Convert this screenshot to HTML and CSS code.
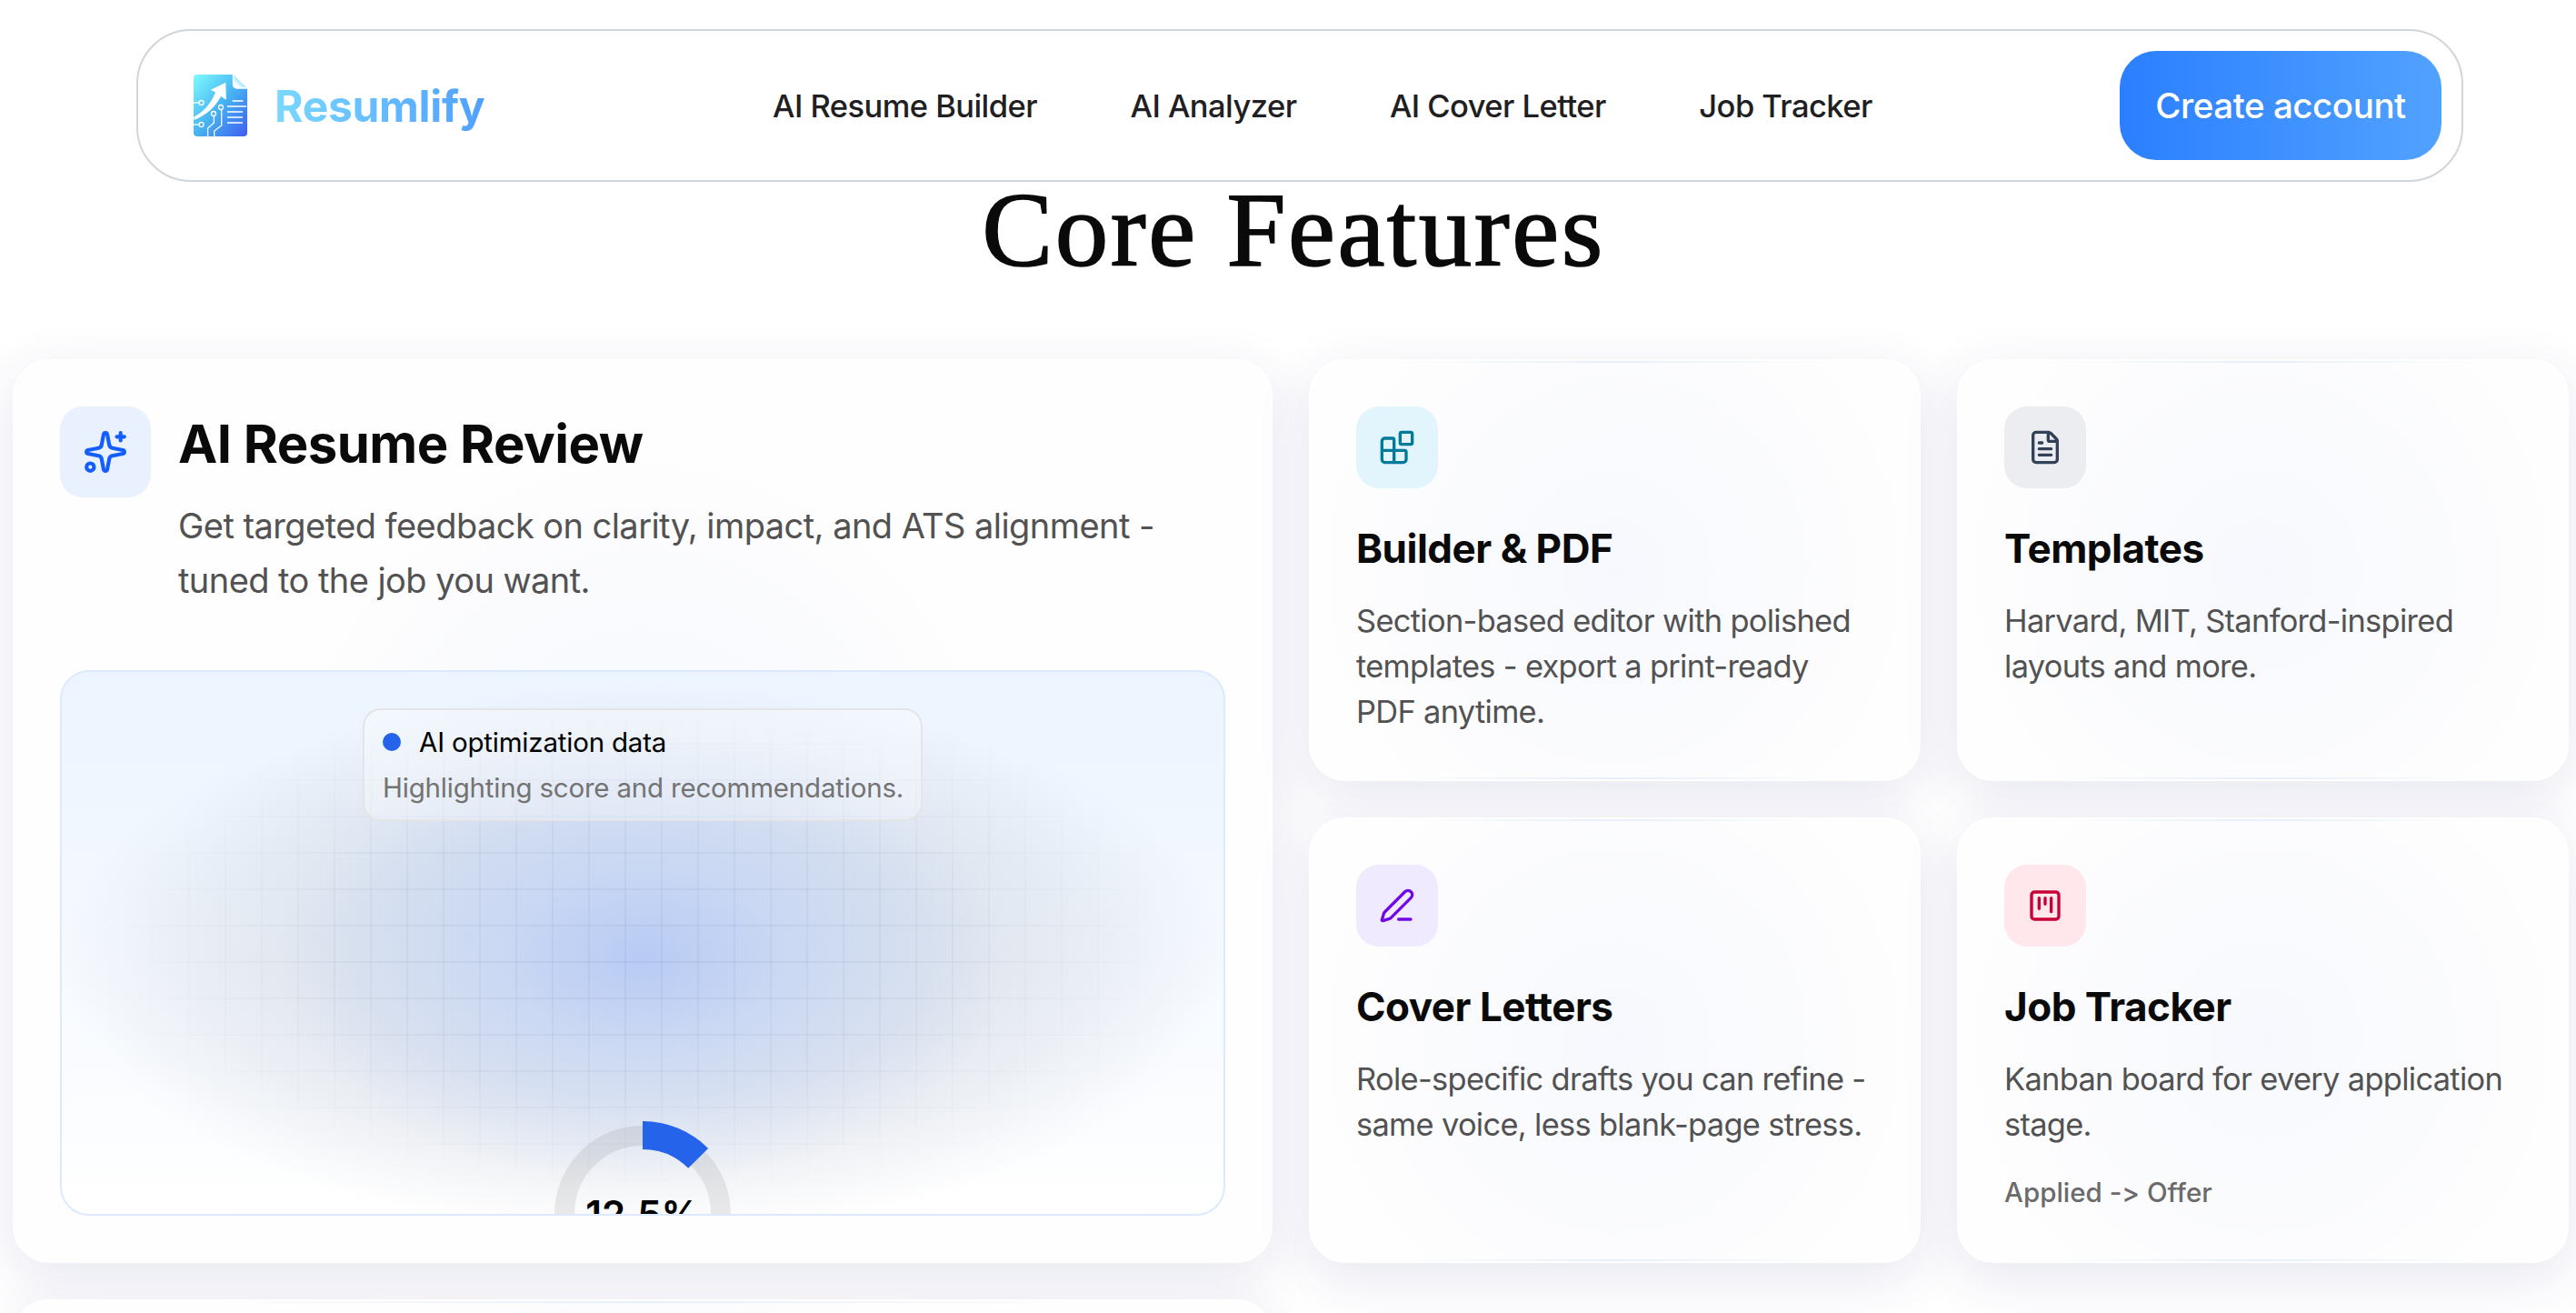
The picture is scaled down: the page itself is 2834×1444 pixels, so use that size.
FILE: index.html
```html
<!DOCTYPE html>
<html lang="en">
<head>
    <meta charset="UTF-8">
    <meta name="viewport" content="width=device-width, initial-scale=1.0">
    <title>Resumlify - Core Features</title>
    <link rel="stylesheet" href="styles.css">
</head>
<body>
    <header class="navbar">
        <a class="brand" href="#">
            <svg class="brand-logo" viewBox="0 0 60 70">
                <defs>
                    <linearGradient id="sheet" x1="0" y1="0" x2="1" y2="1">
                        <stop offset="0" stop-color="#7dfbff"/>
                        <stop offset="0.5" stop-color="#47b4f2"/>
                        <stop offset="1" stop-color="#3f5cf0"/>
                    </linearGradient>
                    <linearGradient id="fold" x1="0" y1="1" x2="1" y2="0">
                        <stop offset="0.2" stop-color="#ffffff"/>
                        <stop offset="0.6" stop-color="#6fe0fa"/>
                    </linearGradient>
                </defs>
                <path fill="url(#sheet)" d="M4 1H43L59 16V65a4 4 0 0 1-4 4H4a4 4 0 0 1-4-4V5a4 4 0 0 1 4-4z"/>
                <path fill="url(#fold)" stroke="#fff" stroke-width="1.4" d="M43.5 0V12a4 4 0 0 0 4 4H60z"/>
                <path fill="#fff" d="M35.3 9.7 18.8 17.7 24 20.5C19 33 11 42 0.4 47.5V51C13 46 24 37 30 25L35.9 28.8z"/>
                <g fill="none" stroke="#fff" stroke-width="1.3">
                    <circle cx="8.5" cy="32" r="2.5"/><path d="M0 32h6"/>
                    <circle cx="8.5" cy="56" r="2.5"/><path d="M0 56h6"/>
                    <circle cx="30" cy="37" r="2.5"/><path d="M30.7 39.5V57l-8 6v6"/>
                    <circle cx="22" cy="44" r="2.5"/><path d="M22.4 46.5V54l-6.8 6v9"/>
                    <path d="M42.5 30h12M37 36h21M37 42h17M37 48h17M37 54h17"/>
                </g>
            </svg>
            <span class="brand-name">Resumlify</span>
        </a>
        <nav class="nav-links">
            <a href="#">AI Resume Builder</a>
            <a href="#">AI Analyzer</a>
            <a href="#">AI Cover Letter</a>
            <a href="#">Job Tracker</a>
        </nav>
        <a class="btn-create" href="#">Create account</a>
    </header>

    <h1 class="section-title">Core Features</h1>

    <main class="features">
        <section class="card card-review">
            <div class="review-head">
                <div class="icon icon-blue">
                    <svg viewBox="0 0 24 24">
                        <path d="M11.017 2.814a1 1 0 0 1 1.966 0l1.051 5.558a2 2 0 0 0 1.594 1.594l5.558 1.051a1 1 0 0 1 0 1.966l-5.558 1.051a2 2 0 0 0-1.594 1.594l-1.051 5.558a1 1 0 0 1-1.966 0l-1.051-5.558a2 2 0 0 0-1.594-1.594l-5.558-1.051a1 1 0 0 1 0-1.966l5.558-1.051a2 2 0 0 0 1.594-1.594z"/>
                        <path d="M20 2v4M22 4h-4"/>
                        <circle cx="4" cy="20" r="2"/>
                    </svg>
                </div>
                <div>
                    <h2>AI Resume Review</h2>
                    <p>Get targeted feedback on clarity, impact, and ATS alignment -<br>tuned to the job you want.</p>
                </div>
            </div>
            <div class="preview">
                <div class="legend">
                    <div class="legend-title"><span class="dot"></span>AI optimization data</div>
                    <div class="legend-text">Highlighting score and recommendations.</div>
                </div>
                <div class="score">
                    <svg viewBox="0 0 204 204">
                        <circle class="score-track" cx="102" cy="102" r="86"/>
                        <circle class="score-value" cx="102" cy="102" r="86.5" pathLength="100" stroke-dasharray="12.5 87.5" transform="rotate(-90 102 102)"/>
                    </svg>
                    <span class="score-label">12.5%</span>
                </div>
            </div>
        </section>

        <section class="card card-small">
            <div class="icon icon-cyan">
                <svg viewBox="0 0 24 24">
                    <path d="M10 22V7a1 1 0 0 0-1-1H4a2 2 0 0 0-2 2v12a2 2 0 0 0 2 2h12a2 2 0 0 0 2-2v-5a1 1 0 0 0-1-1H2"/>
                    <rect x="14" y="2" width="8" height="8" rx="1"/>
                </svg>
            </div>
            <h3>Builder &amp; PDF</h3>
            <p>Section-based editor with polished<br>templates - export a print-ready<br>PDF anytime.</p>
        </section>

        <section class="card card-small">
            <div class="icon icon-slate">
                <svg viewBox="0 0 24 24">
                    <path d="M6 22a2 2 0 0 1-2-2V4a2 2 0 0 1 2-2h8a2.4 2.4 0 0 1 1.704.706l3.588 3.588A2.4 2.4 0 0 1 20 8v12a2 2 0 0 1-2 2z"/>
                    <path d="M14 2v5a1 1 0 0 0 1 1h5M10 9H8M16 13H8M16 17H8"/>
                </svg>
            </div>
            <h3>Templates</h3>
            <p>Harvard, MIT, Stanford-inspired<br>layouts and more.</p>
        </section>

        <section class="card card-small">
            <div class="icon icon-violet">
                <svg viewBox="0 0 24 24">
                    <path d="M13 21h8"/>
                    <path d="M21.174 6.812a1 1 0 0 0-3.986-3.987L3.842 16.174a2 2 0 0 0-.5.83l-1.321 4.352a.5.5 0 0 0 .623.622l4.353-1.32a2 2 0 0 0 .83-.497z"/>
                </svg>
            </div>
            <h3>Cover Letters</h3>
            <p>Role-specific drafts you can refine -<br>same voice, less blank-page stress.</p>
        </section>

        <section class="card card-small">
            <div class="icon icon-rose">
                <svg viewBox="0 0 24 24">
                    <rect x="3" y="3" width="18" height="18" rx="2"/>
                    <path d="M8 7v7M12 7v4M16 7v9"/>
                </svg>
            </div>
            <h3>Job Tracker</h3>
            <p>Kanban board for every application<br>stage.</p>
            <p class="note">Applied -&gt; Offer</p>
        </section>

        <section class="card card-small card-wide"></section>
    </main>
</body>
</html>
```

FILE: styles.css
```css
* {
    margin: 0;
    padding: 0;
    box-sizing: border-box;
}

body {
    height: 1444px;
    overflow: hidden;
    background: #fff;
    color: #0a0a0a;
    font-family: Inter, "Liberation Sans", sans-serif;
    font-variant-ligatures: no-contextual;
}

a {
    color: inherit;
    text-decoration: none;
    white-space: nowrap;
}

/* Navbar */
.navbar {
    display: flex;
    align-items: center;
    width: 2560px;
    height: 168px;
    margin: 32px 0 0 150px;
    padding: 0 22px 0 61px;
    border: 2px solid #d1d5db;
    border-radius: 60px;
}

.brand {
    display: flex;
    align-items: center;
    gap: 29px;
    width: 637px;
}

.brand-logo {
    width: 60px;
    height: 70px;
}

.brand-name {
    font-size: 48px;
    font-weight: 700;
    letter-spacing: -0.3px;
    background: linear-gradient(90deg, #7ad8ff, #509fff);
    background-clip: text;
    -webkit-background-clip: text;
    color: transparent;
}

.nav-links {
    display: flex;
    gap: 102.5px;
    font-size: 34.5px;
    font-weight: 500;
    letter-spacing: -0.55px;
    color: #202022;
}

.btn-create {
    display: flex;
    align-items: center;
    justify-content: center;
    width: 354px;
    height: 120px;
    margin-left: auto;
    border-radius: 40px;
    background: linear-gradient(90deg, #2b7fff, #51a2ff);
    color: #fff;
    font-size: 38.5px;
    font-weight: 500;
    letter-spacing: -0.45px;
}

.section-title {
    margin: 3px 0 92px 12px;
    text-align: center;
    font-family: "Liberation Serif", serif;
    font-size: 117px;
    font-weight: 400;
    letter-spacing: 2.5px;
    line-height: 100px;
    -webkit-text-stroke: 1.6px #0a0a0a;
}

/* Feature grid */
.features {
    display: grid;
    grid-template-columns: 1386px 673px 673px;
    grid-template-rows: 464px 490px 464px;
    gap: 40px;
    margin-left: 14px;
}

.card {
    position: relative;
    padding: 50px;
    border: 2px solid #fff;
    border-radius: 40px;
    background: #fefefe;
    box-shadow: 0 16px 60px rgba(50, 50, 140, 0.12);
}

.card-review {
    grid-row: span 2;
    display: flex;
    flex-direction: column;
    justify-content: space-between;
    background: #fefefe radial-gradient(circle, rgba(90, 120, 240, 0.06), rgba(90, 120, 240, 0) 400px);
}

.card-small {
    background-image:
        linear-gradient(90deg, transparent 15%, #e6effe 50%, transparent 85%),
        linear-gradient(90deg, transparent 15%, #e6effe 50%, transparent 85%),
        radial-gradient(circle, rgba(90, 120, 240, 0.045), rgba(90, 120, 240, 0) 340px);
    background-size: 100% 2px, 100% 2px, 100% 100%;
    background-position: top, bottom, center;
    background-repeat: no-repeat;
}

.icon {
    display: flex;
    align-items: center;
    justify-content: center;
    flex-shrink: 0;
    width: 90px;
    height: 90px;
    border-radius: 25px;
}

.icon svg {
    width: 40px;
    height: 40px;
    fill: none;
    stroke: currentColor;
    stroke-width: 2;
    stroke-linecap: round;
    stroke-linejoin: round;
}

.icon-blue {
    width: 100px;
    height: 100px;
    background: #e9f1ff;
    color: #155dfc;
}

.icon-blue svg {
    width: 50px;
    height: 50px;
}

.icon-cyan {
    background: #e3f5fc;
    color: #007a9b;
}

.icon-slate {
    background: #ebedf0;
    color: #314158;
}

.icon-violet {
    background: #f0eaff;
    color: #7008e7;
}

.icon-rose {
    background: #ffe7ec;
    color: #c70036;
}

.card h3 {
    margin-top: 38px;
    font-size: 44px;
    font-weight: 700;
    letter-spacing: -0.5px;
    line-height: 56px;
}

.card p {
    margin-top: 27px;
    color: #525252;
    font-size: 34.4px;
    letter-spacing: -0.68px;
    line-height: 50px;
    white-space: nowrap;
}

.card .note {
    margin-top: 27px;
    color: #6b6b6b;
    font-size: 29.5px;
    font-weight: 500;
    letter-spacing: 0;
    line-height: 44px;
}

/* AI review card */
.review-head {
    display: flex;
    gap: 30px;
}

.review-head h2 {
    margin-top: 6px;
    font-size: 58px;
    font-weight: 700;
    letter-spacing: -0.5px;
    line-height: 70px;
}

.card .review-head p {
    margin-top: 25px;
    font-size: 38px;
    letter-spacing: -0.56px;
    line-height: 60px;
}

.preview {
    position: relative;
    display: flex;
    flex-direction: column;
    align-items: center;
    height: 600px;
    padding-top: 40px;
    overflow: hidden;
    border: 2px solid #dbeafe;
    border-radius: 32px;
    background:
        radial-gradient(ellipse 400px 250px at 50% 53%, rgba(150, 180, 255, 0.5), rgba(170, 198, 255, 0.36) 40%, rgba(180, 205, 255, 0)),
        radial-gradient(ellipse 645px 300px at 50% 53%, rgba(40, 60, 100, 0.13), rgba(40, 60, 100, 0.115) 50%, rgba(40, 60, 100, 0.065) 75%, rgba(40, 60, 100, 0)),
        linear-gradient(#ecf4ff, #fff);
}

/* Faint grid fading out towards the edges */
.preview::before {
    content: "";
    position: absolute;
    inset: 0;
    background-image:
        linear-gradient(90deg, rgba(60, 80, 120, 0.06) 2px, transparent 2px),
        linear-gradient(rgba(60, 80, 120, 0.06) 2px, transparent 2px);
    background-size: 40px 40px;
    background-position: center;
    mask-image: radial-gradient(ellipse 600px 290px at center, #000 40%, transparent);
}

.legend {
    position: relative;
    width: 616px;
    height: 124px;
    flex-shrink: 0;
    padding: 10px 20px;
    border: 2px solid #e5e5e5;
    border-radius: 20px;
    background: rgba(255, 255, 255, 0.35);
    font-size: 29.5px;
    letter-spacing: -0.2px;
    line-height: 50px;
}

.legend-title {
    display: flex;
    align-items: center;
    gap: 20px;
    color: #000;
}

.dot {
    width: 20px;
    height: 20px;
    border-radius: 50%;
    background: #2563eb;
}

.legend-text {
    color: #737373;
    white-space: nowrap;
}

.score {
    position: relative;
    flex-shrink: 0;
    display: grid;
    place-items: center;
    width: 204px;
    height: 204px;
    margin-top: 330px;
}

.score svg, .score-label {
    grid-area: 1 / 1;
}

.score svg {
    width: 204px;
    height: 204px;
    fill: none;
}

.score-track {
    stroke: rgba(0, 0, 0, 0.075);
    stroke-width: 22;
}

.score-value {
    stroke: #2563eb;
    stroke-width: 31;
}

.score-label {
    color: #000;
    font-size: 42px;
    font-weight: 600;
}
```
